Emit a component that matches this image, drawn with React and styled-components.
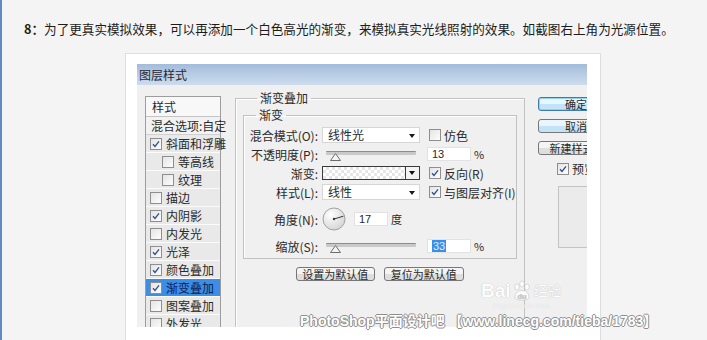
import React from "react";
import styled, { createGlobalStyle } from "styled-components";

const GlobalStyle = createGlobalStyle`
  html, body {
    margin: 0;
    padding: 0;
    background: #f4f4f4;
  }
  body {
    font-family: "Liberation Sans", "Noto Sans CJK SC", sans-serif;
  }
`;

const Page = styled.div`
  position: relative;
  height: 340px;
  border-left: 2px solid #6189c6;
  overflow: hidden;
`;

const StepText = styled.p`
  margin: 0;
  padding: 20px 0 0 22px;
  font-family: "Noto Sans CJK SC", sans-serif;
  font-size: 12.6px;
  line-height: 17px;
  color: #1c1c1c;
  white-space: nowrap;

  b {
    color: #2b1d08;
  }
`;

const Frame = styled.div`
  box-sizing: border-box;
  margin: 16px 0 0 123px;
  width: 476px;
  height: 300px;
  padding: 10px 0 0 11px;
  background: #fff;
  border: 1px solid #dedede;
`;

const Dialog = styled.div`
  width: 450px;
  height: 263px;
  background: #f0f0f0;
  overflow: hidden;
  font-family: "Noto Sans CJK SC", sans-serif;
  font-size: 12px;
  color: #2a2a2a;
`;

const TitleBar = styled.div`
  height: 21px;
  line-height: 21px;
  padding-left: 2px;
  background: linear-gradient(#a3bcdb, #cddcee);
  color: #1d2a3a;
`;

const DialogBody = styled.div`
  display: flex;
  align-items: flex-start;
  gap: 14px;
  padding: 7px 0 0 8px;
`;

const StyleList = styled.div`
  flex-shrink: 0;
  width: 76px;
  margin-top: 4px;
  box-sizing: border-box;
  border: 1px solid #9d9d9d;
  border-bottom: none;
  background: #f5f5f5;
`;

const ListHeader = styled.div`
  height: 19px;
  line-height: 19px;
  padding-left: 6px;
  border-bottom: 1px solid #c4c4c4;
  background: #f8f8f8;
`;

const ListItem = styled.div`
  display: flex;
  align-items: center;
  gap: 4px;
  height: 17px;
  padding-left: ${(p) => (p.$indent ? 16 : 4)}px;
  border-bottom: 1px solid #fbfbfb;
  background: ${(p) => (p.$selected ? "#3b8de6" : "#e9e9e9")};
  color: ${(p) => (p.$selected ? "#0c1e58" : "#2a2a2a")};
  white-space: nowrap;
`;

const BlendItem = styled(ListItem)`
  padding-left: 5px;
  background: #f2f2f2;
  border-bottom-color: #d0d0d0;
`;

const Box = styled.span`
  flex-shrink: 0;
  display: inline-flex;
  align-items: center;
  justify-content: center;
  width: 10px;
  height: 10px;
  border: 1px solid #8e8e8e;
  background: linear-gradient(135deg, #e4e4e4, #fdfdfd);
`;

const Check = ({ on }) => (
  <Box>
    {on && (
      <svg width="8" height="8" viewBox="0 0 8 8">
        <path d="M1 4.2 L3 6.4 L7 1.4" fill="none" stroke="#2c4d8f" strokeWidth="1.3" />
      </svg>
    )}
  </Box>
);

const Settings = styled.div`
  flex-shrink: 0;
  width: 289px;
`;

const OuterGroup = styled.fieldset`
  margin: 0;
  padding: 0 7px 30px;
  height: 250px;
  box-sizing: border-box;
  border: 1px solid #c2c2c2;
  box-shadow: inset 1px 1px 0 #fff;
`;

const Legend = styled.legend`
  margin-left: ${(p) => p.$offset}px;
  padding: 0 3px;
  font-size: 12px;
  line-height: 12px;
`;

const InnerGroup = styled.fieldset`
  margin: 5px 0 0;
  padding: 6px 0 4px;
  border: 1px solid #c2c2c2;
  box-shadow: inset 1px 1px 0 #fff;
`;

const FormGrid = styled.div`
  display: grid;
  grid-template-rows: 16px 16px 16px 16px 32px 16px;
  row-gap: 3px;
`;

const Row = styled.div`
  display: flex;
  align-items: center;
  white-space: nowrap;
`;

const Label = styled.span`
  width: 74px;
  margin-right: 4px;
  text-align: right;
`;

const Select = styled.div`
  position: relative;
  box-sizing: border-box;
  width: 98px;
  height: 16px;
  line-height: 14px;
  padding-left: 5px;
  background: #fff;
  border: 1px solid #d6d6d6;

  &::after {
    content: "";
    position: absolute;
    right: 4px;
    top: 6px;
    border: 3px solid transparent;
    border-top: 4px solid #1a1a1a;
  }
`;

const Option = styled.label`
  display: flex;
  align-items: center;
  gap: 3px;
  margin-left: 9px;
`;

const SliderWrap = styled.div`
  width: 98px;
  height: 16px;
  padding: 0 4px;
  box-sizing: border-box;
  position: relative;
`;

const Track = styled.div`
  margin-top: 5px;
  height: 3px;
  background: #c9c9c9;
  border-top: 1px solid #8d8d8d;
  border-radius: 1px;
`;

const Thumb = styled.svg`
  position: absolute;
  left: ${(p) => p.$at}px;
  top: 7px;
`;

const Slider = ({ at }) => (
  <SliderWrap>
    <Track />
    <Thumb $at={at} width="11" height="8" viewBox="0 0 11 8">
      <path d="M5.5 0.5 L10.5 7.5 L0.5 7.5 Z" fill="#f4f4f4" stroke="#6c6c6c" />
    </Thumb>
  </SliderWrap>
);

const Field = styled.div`
  box-sizing: border-box;
  width: ${(p) => p.$w}px;
  height: 14px;
  margin-left: ${(p) => p.$gap}px;
  padding-left: 4px;
  line-height: 13px;
  background: #fff;
  border: 1px solid #e2e2e2;
  font-family: "Liberation Sans", sans-serif;
  font-size: 11px;
`;

const Picked = styled.span`
  background: #3a8fe8;
  color: #dff0ff;
  padding: 0 1px;
`;

const Unit = styled.span`
  margin-left: 3px;
  font-size: 11px;
`;

const GradientPicker = styled.div`
  display: flex;
  box-sizing: border-box;
  width: 98px;
  height: 14px;
  border: 1px solid #3a3a3a;
  background: #fff;
`;

const Swatch = styled.div`
  flex: 1;
  background-color: #fff;
  background-image: linear-gradient(45deg, #e6e6e6 25%, transparent 25%, transparent 75%, #e6e6e6 75%),
    linear-gradient(45deg, #e6e6e6 25%, transparent 25%, transparent 75%, #e6e6e6 75%);
  background-size: 6px 6px;
  background-position: 0 0, 3px 3px;
`;

const DropButton = styled.div`
  position: relative;
  width: 13px;
  border-left: 1px solid #3a3a3a;
  background: #f3f3f3;

  &::after {
    content: "";
    position: absolute;
    left: 3px;
    top: 4px;
    border: 3px solid transparent;
    border-top: 4px solid #111;
  }
`;

const Dial = () => (
  <svg width="24" height="24" viewBox="0 0 24 24">
    <defs>
      <radialGradient id="dialFill" cx="0.35" cy="0.3" r="0.8">
        <stop offset="0" stopColor="#ffffff" />
        <stop offset="1" stopColor="#d2d2d2" />
      </radialGradient>
    </defs>
    <circle cx="12" cy="12" r="11" fill="url(#dialFill)" stroke="#a2a2a2" />
    <line x1="12" y1="12" x2="21.4" y2="9.2" stroke="#3a3a3a" strokeWidth="1" />
    <circle cx="12" cy="12" r="1.2" fill="#3a3a3a" />
  </svg>
);

const ButtonRow = styled.div`
  display: flex;
  justify-content: center;
  gap: 9px;
  margin-top: 8px;
`;

const Button = styled.div`
  box-sizing: border-box;
  width: ${(p) => p.$w || 80}px;
  height: 14px;
  line-height: 12px;
  font-size: 11px;
  text-align: center;
  border: 1px solid ${(p) => (p.$primary ? "#3d7bab" : "#777")};
  border-radius: 3px;
  background: ${(p) =>
    p.$hover
      ? "linear-gradient(#eaf6fd 50%, #c4e3f7 50%)"
      : "linear-gradient(#f4f4f4 50%, #dedede 50%)"};
  box-shadow: ${(p) => (p.$primary ? "inset 0 0 0 1px #8fd3f5" : "none")};
  white-space: nowrap;
  overflow: hidden;
`;

const SideColumn = styled.div`
  flex-shrink: 0;
  display: flex;
  flex-direction: column;
  gap: 8px;
  width: 76px;
  margin-top: 5px;
`;

const PreviewToggle = styled.label`
  display: flex;
  align-items: center;
  gap: 3px;
  margin: 0 0 0 19px;
  line-height: 12px;
`;

const PreviewBox = styled.div`
  margin: 3px 0 0 20px;
  width: 56px;
  height: 60px;
  border: 1px solid #c4c4c4;
  background: #ebebeb;
`;

const Watermark = styled.div`
  position: absolute;
  left: 298px;
  top: 314px;
  font-family: "Liberation Sans", "Noto Sans CJK SC", sans-serif;
  font-weight: bold;
  font-size: 14px;
  line-height: 15px;
  color: #fff;
  white-space: nowrap;
  text-shadow: 1px 0 0 #8e8e8e, -1px 0 0 #8e8e8e, 0 1px 0 #8e8e8e, 0 -1px 0 #8e8e8e;
`;

const BaiduMark = styled.div`
  position: absolute;
  left: 479px;
  top: 280px;
  display: flex;
  flex-direction: column;
  align-items: center;
  color: #fff;
  opacity: 0.9;
`;

const BaiduLine = styled.div`
  display: flex;
  align-items: center;
  font-family: "Liberation Sans", "Noto Sans CJK SC", sans-serif;
  font-weight: bold;
  font-size: 19px;
  line-height: 22px;
  text-shadow: 0 0 1px #a9a9a9;

  small {
    font-size: 14px;
    font-weight: normal;
    margin-left: 1px;
  }
`;

const BaiduSub = styled.div`
  font-family: "Liberation Sans", sans-serif;
  font-size: 7px;
  line-height: 8px;
  color: #f7f7f7;
  text-shadow: 0 0 1px #d0d0d0;
`;

const Paw = () => (
  <svg width="22" height="22" viewBox="0 0 22 22">
    <g fill="#fff" stroke="#bdbdbd" strokeWidth="0.6">
      <ellipse cx="6" cy="7" rx="2.3" ry="3" />
      <ellipse cx="11" cy="4" rx="2.3" ry="3" />
      <ellipse cx="16" cy="7" rx="2.3" ry="3" />
      <path d="M4 18 C4 12 8 10.5 11 10.5 C14 10.5 18 12 18 18 C18 21 4 21 4 18 Z" />
    </g>
    <text x="11" y="19" textAnchor="middle" fontSize="7.5" fontWeight="bold" fill="#c8c8c8" fontFamily="Liberation Sans">du</text>
  </svg>
);

const styleItems = [
  { text: "斜面和浮雕", on: true },
  { text: "等高线", indent: true },
  { text: "纹理", indent: true },
  { text: "描边" },
  { text: "内阴影", on: true },
  { text: "内发光" },
  { text: "光泽", on: true },
  { text: "颜色叠加", on: true },
  { text: "渐变叠加", on: true, selected: true },
  { text: "图案叠加" },
  { text: "外发光" },
];

const StylePanel = () => (
  <StyleList>
    <ListHeader>样式</ListHeader>
    <BlendItem>混合选项:自定</BlendItem>
    {styleItems.map((item) => (
      <ListItem key={item.text} $indent={item.indent} $selected={item.selected}>
        <Check on={item.on} />
        {item.text}
      </ListItem>
    ))}
  </StyleList>
);

const GradientSettings = () => (
  <Settings>
    <OuterGroup>
      <Legend $offset={14}>渐变叠加</Legend>
      <InnerGroup>
        <Legend $offset={12}>渐变</Legend>
        <FormGrid>
          <Row>
            <Label>混合模式(O):</Label>
            <Select>线性光</Select>
            <Option>
              <Check />
              仿色
            </Option>
          </Row>
          <Row>
            <Label>不透明度(P):</Label>
            <Slider at={8} />
            <Field $w={44} $gap={7}>13</Field>
            <Unit>%</Unit>
          </Row>
          <Row>
            <Label>渐变:</Label>
            <GradientPicker>
              <Swatch />
              <DropButton />
            </GradientPicker>
            <Option>
              <Check on />
              反向(R)
            </Option>
          </Row>
          <Row>
            <Label>样式(L):</Label>
            <Select>线性</Select>
            <Option>
              <Check on />
              与图层对齐(I)
            </Option>
          </Row>
          <Row>
            <Label>角度(N):</Label>
            <Dial />
            <Field $w={34} $gap={8}>17</Field>
            <Unit>度</Unit>
          </Row>
          <Row>
            <Label>缩放(S):</Label>
            <Slider at={8} />
            <Field $w={44} $gap={7}>
              <Picked>33</Picked>
            </Field>
            <Unit>%</Unit>
          </Row>
        </FormGrid>
      </InnerGroup>
      <ButtonRow>
        <Button $w={79}>设置为默认值</Button>
        <Button $w={80}>复位为默认值</Button>
      </ButtonRow>
    </OuterGroup>
  </Settings>
);

const ActionColumn = () => (
  <SideColumn>
    <Button $w={76} $primary $hover>确定</Button>
    <Button $w={76} $hover>取消</Button>
    <Button $w={76}>新建样式...</Button>
    <PreviewToggle>
      <Check on />
      预览(V)
    </PreviewToggle>
    <PreviewBox />
  </SideColumn>
);

export default function App() {
  return (
    <>
      <GlobalStyle />
      <Page>
        <StepText>
          <b>8：</b>为了更真实模拟效果，可以再添加一个白色高光的渐变，来模拟真实光线照射的效果。如截图右上角为光源位置。
        </StepText>
        <Frame>
          <Dialog>
            <TitleBar>图层样式</TitleBar>
            <DialogBody>
              <StylePanel />
              <GradientSettings />
              <ActionColumn />
            </DialogBody>
          </Dialog>
        </Frame>
        <BaiduMark>
          <BaiduLine>
            Bai
            <Paw />
            <small>经验</small>
          </BaiduLine>
          <BaiduSub>jingyan.baidu.com</BaiduSub>
        </BaiduMark>
        <Watermark>PhotoShop平面设计吧 【www.linecg.com/tieba/1783】</Watermark>
      </Page>
    </>
  );
}
